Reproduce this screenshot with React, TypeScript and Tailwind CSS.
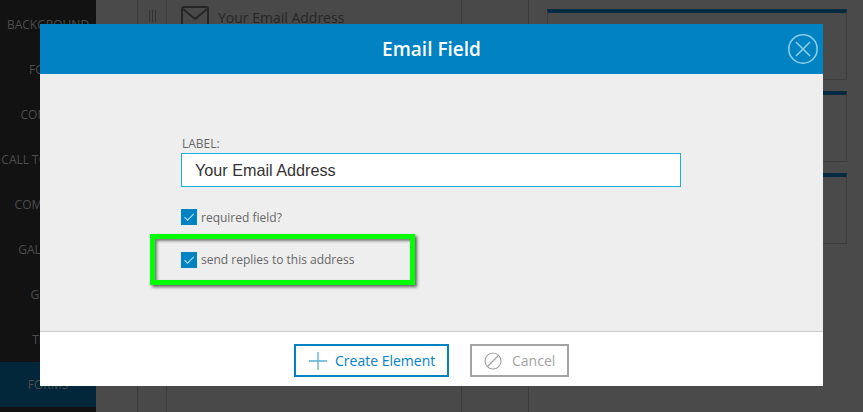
const navItems = ['BACKGROUND', 'FONTS', 'CONTENT', 'CALL TO ACTION', 'COMMERCE', 'GALLERIES', 'GRIDS', 'TEAM'];

const Check = () => (
  <span className="w-4 h-4 bg-[#0082c3] flex items-center justify-center shrink-0">
    <svg width="16" height="16" viewBox="0 0 16 16" fill="none">
      <path d="M3.5 8.2L6.6 11.2L12.8 4.8" stroke="#b5e0f5" strokeWidth="1.1" />
    </svg>
  </span>
);

const App = () => {
  return (
    <div className="relative w-[863px] h-[412px] overflow-hidden bg-[#4a4a4a] font-['Open_Sans',sans-serif]">
      {/* page behind the modal */}
      <div className="flex h-full">
        <div className="w-24 shrink-0 bg-[#121212] flex flex-col pt-[2px] text-[12px] text-[#4d4d4d]">
          {navItems.map((item) => (
            <div key={item} className="h-[45px] shrink-0 flex items-center justify-center whitespace-nowrap">
              {item}
            </div>
          ))}
          <div className="h-[45px] shrink-0 flex items-center justify-center bg-[#02263a]">FORMS</div>
        </div>

        <div className="w-[41px] shrink-0" />

        <div className="w-[392px] shrink-0 flex border-x border-[#3c3c3c] bg-[#494949]">
          <div className="w-[29px] h-full border-r border-[#3c3c3c]">
            <div className="flex gap-[2px] justify-center pt-[10px]">
              <span className="w-px h-[12px] bg-[#333]" />
              <span className="w-px h-[12px] bg-[#333]" />
              <span className="w-px h-[12px] bg-[#333]" />
            </div>
          </div>
          <div className="w-[295px] h-full border-r border-[#3c3c3c] flex items-start gap-[9px] pl-[14px] pt-[6px]">
            <svg width="28" height="22" viewBox="0 0 28 22" fill="none" className="shrink-0">
              <rect x="1" y="1" width="26" height="20" rx="2" stroke="#262626" strokeWidth="2" />
              <path d="M2 3L14 13L26 3" stroke="#262626" strokeWidth="2" />
            </svg>
            <span className="text-[14px] text-[#262626] leading-[22px] pt-px whitespace-nowrap">Your Email Address</span>
          </div>
        </div>

        <div className="w-[300px] shrink-0 ml-[18px] pt-[9px] flex flex-col gap-[11px]">
          <div className="h-[71px] border-t-4 border-x border-b border-[#3d3d3d] border-t-[#022a40]" />
          <div className="h-[71px] border-t-4 border-x border-b border-[#3d3d3d] border-t-[#022a40]" />
          <div className="h-[71px] border-t-4 border-x border-b border-[#3d3d3d] border-t-[#022a40]" />
        </div>
      </div>

      {/* modal */}
      <div className="absolute left-10 top-6 w-[783px] h-[362px] flex flex-col bg-[#eeeeee]">
        <div className="relative h-[50px] shrink-0 bg-[#0082c3] flex items-center justify-center">
          <span className="text-[19px] font-semibold text-white">Email Field</span>
          <svg width="32" height="32" viewBox="0 0 32 32" fill="none" className="absolute left-[747px] top-[9px]">
            <circle cx="16" cy="16" r="14.2" stroke="#8ccdea" strokeWidth="1.6" />
            <path d="M9 9L23 23M23 9L9 23" stroke="#8ccdea" strokeWidth="1.6" />
          </svg>
        </div>

        <div className="flex-1 flex flex-col pl-[110px] pt-[60px]">
          <div className="pl-[31px]">
            <div className="text-[12px] leading-[18px] text-[#666] ml-px pt-px h-[18px]">LABEL:</div>
            <div className="w-[500px] h-[34px] mt-px border border-[#18aee0] bg-white flex items-center pl-[13px] font-['Liberation_Sans',sans-serif] text-[16.2px] text-[#333]">
              Your Email Address
            </div>
            <div className="flex items-center gap-1 mt-[22px] h-4">
              <Check />
              <span className="text-[12px] text-[#666] pt-[2px]">required field?</span>
            </div>
          </div>
          <div className="w-[265px] h-[51px] mt-[9px] border-[5px] border-[#00ff00] shadow-[2px_2px_3px_rgba(0,0,0,0.6),inset_2px_2px_3px_rgba(0,0,0,0.5)] flex items-center gap-1 pl-[26px]">
            <Check />
            <span className="text-[12px] text-[#666]">send replies to this address</span>
          </div>
        </div>

        <div className="h-[55px] shrink-0 bg-white border-t border-[#cccccc] flex justify-center gap-[21px] pt-3">
          <div className="w-[155px] h-[33px] border-2 border-[#0082c3] flex items-center gap-[7px] pl-3 text-[14px] text-[#0082c3]">
            <svg width="20" height="20" viewBox="0 0 20 20" fill="none" className="shrink-0">
              <path d="M10 1V19M1 10H19" stroke="#5aaed8" strokeWidth="1.3" />
            </svg>
            Create Element
          </div>
          <div className="w-[99px] h-[33px] border-2 border-[#a3a3a3] flex items-center gap-[10px] pl-3 text-[14px] text-[#a3a3a3]">
            <svg width="18" height="18" viewBox="0 0 18 18" fill="none" className="shrink-0">
              <circle cx="9" cy="9" r="8" stroke="#a3a3a3" strokeWidth="1.2" />
              <path d="M3.5 14.5L14.5 3.5" stroke="#a3a3a3" strokeWidth="1.2" />
            </svg>
            Cancel
          </div>
        </div>
      </div>
    </div>
  );
};

export default App;
